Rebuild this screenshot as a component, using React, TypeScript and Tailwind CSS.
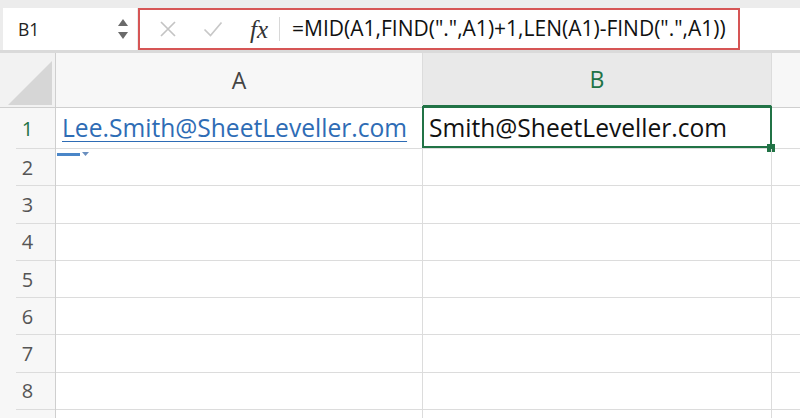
import React from "react";

const FONT = { fontFamily: '"Open Sans", "Liberation Sans", sans-serif' };

function RowHeader({ n, selected, h }: { n: number; selected?: boolean; h: string }) {
  return (
    <div className={`relative flex ${h} w-[56px] shrink-0 items-center justify-center border-r border-[#cfcfcf] bg-[#f7f7f7]`}>
      {n < 9 && <span className={`text-[20px] ${selected ? "text-[#217346]" : "text-[#555]"}`}>{n}</span>}
      <div className="absolute bottom-0 left-[16px] right-0 h-px bg-[#dcdcdc]" />
    </div>
  );
}

export default function App() {
  const rows = [1, 2, 3, 4, 5, 6, 7, 8, 9];
  return (
    <div className="h-[418px] w-[800px] overflow-hidden bg-white" style={FONT}>
      {/* Formula bar */}
      <div className="flex h-[53px] items-stretch border-b-[3px] border-[#dadada] bg-[#ececec] pt-[8px]">
        <div className="ml-[3px] flex h-[42px] w-[134px] items-center justify-between bg-white pl-[15px] pr-[9px]">
          <span className="text-[17.5px] text-[#222]">B1</span>
          <div className="flex flex-col items-center gap-[6px]">
            <svg width="10" height="7" viewBox="0 0 10 7"><path d="M5 0 L10 7 L0 7 Z" fill="#6a6a6a" /></svg>
            <svg width="10" height="7" viewBox="0 0 10 7"><path d="M0 0 L10 0 L5 7 Z" fill="#6a6a6a" /></svg>
          </div>
        </div>
        <div className="ml-[1px] flex h-[42px] w-[602px] items-center border-2 border-[#d65555] bg-white">
          <svg className="ml-[19px]" width="18" height="18" viewBox="0 0 18 18">
            <path d="M2 2 L16 16 M16 2 L2 16" stroke="#c4c4c4" strokeWidth="1.7" fill="none" />
          </svg>
          <svg className="ml-[26px]" width="20" height="16" viewBox="0 0 20 16">
            <path d="M1.5 8.5 L7.5 14.5 L18.5 1.5" stroke="#c8c8c8" strokeWidth="1.7" fill="none" />
          </svg>
          <span
            className="ml-[27px] text-[25px] italic leading-none text-[#333]"
            style={{ fontFamily: '"Liberation Serif", "DejaVu Serif", serif' }}
          >
            fx
          </span>
          <div className="ml-[11px] h-[24px] w-px bg-[#d8d8d8]" />
          <span className="ml-[12px] whitespace-nowrap text-[21px] text-[#111]">
            =MID(A1,FIND(".",A1)+1,LEN(A1)-FIND(".",A1))
          </span>
        </div>
        <div className="h-[42px] flex-1 bg-white" />
      </div>

      {/* Column header row */}
      <div className="flex h-[55px] border-b border-[#cfcfcf]">
        <div className="relative w-[56px] shrink-0 border-r border-[#cfcfcf] bg-[#f2f2f2]">
          <svg className="absolute left-[8px] top-[8px]" width="44" height="44" viewBox="0 0 44 44">
            <path d="M44 0 L44 44 L0 44 Z" fill="#d6d6d6" />
          </svg>
        </div>
        <div className="flex w-[367px] shrink-0 items-center justify-center border-r border-[#dcdcdc] bg-[#f7f7f7]">
          <span className="text-[23px] text-[#444]">A</span>
        </div>
        <div className="flex w-[349px] shrink-0 items-center justify-center border-b-2 border-r border-[#217346] border-r-[#dcdcdc] bg-[#e9e9e9]">
          <span className="text-[23px] font-medium text-[#217346]">B</span>
        </div>
        <div className="flex-1 bg-[#f7f7f7]" />
      </div>

      {/* Rows */}
      {rows.map((n) => {
        const h = n === 1 ? "h-[41px]" : "h-[37.3px]";
        return (
          <div key={n} className="flex">
            <RowHeader n={n} selected={n === 1} h={h} />
            <div className={`relative flex ${h} w-[367px] shrink-0 items-center border-b border-r border-[#dcdcdc]`}>
              {n === 1 && (
                <span className="ml-[6px] whitespace-nowrap text-[24.6px] text-[#2e6cb5] underline decoration-1 underline-offset-[4px]">
                  Lee.Smith@SheetLeveller.com
                </span>
              )}
              {n === 2 && (
                <div className="absolute left-[1px] top-[3px] flex items-center gap-[2px]">
                  <div className="h-[3px] w-[23px] bg-[#4a86c8]" />
                  <svg width="7" height="4" viewBox="0 0 7 4"><path d="M0 0 L7 0 L3.5 4 Z" fill="#6a8fbf" /></svg>
                </div>
              )}
            </div>
            <div className={`relative flex ${h} w-[349px] shrink-0 items-center border-b border-r border-[#dcdcdc]`}>
              {n === 1 && (
                <>
                  <div className="absolute -left-px -top-[2px] bottom-0 -right-px border-2 border-[#217346]" />
                  <span className="ml-[6px] whitespace-nowrap text-[24.6px] text-[#111]">Smith@SheetLeveller.com</span>
                  <div className="absolute -bottom-[4px] -right-[4px] h-[8px] w-[8px] bg-[#217346]" />
                </>
              )}
            </div>
            <div className={`${h} flex-1 border-b border-[#dcdcdc]`} />
          </div>
        );
      })}
    </div>
  );
}
